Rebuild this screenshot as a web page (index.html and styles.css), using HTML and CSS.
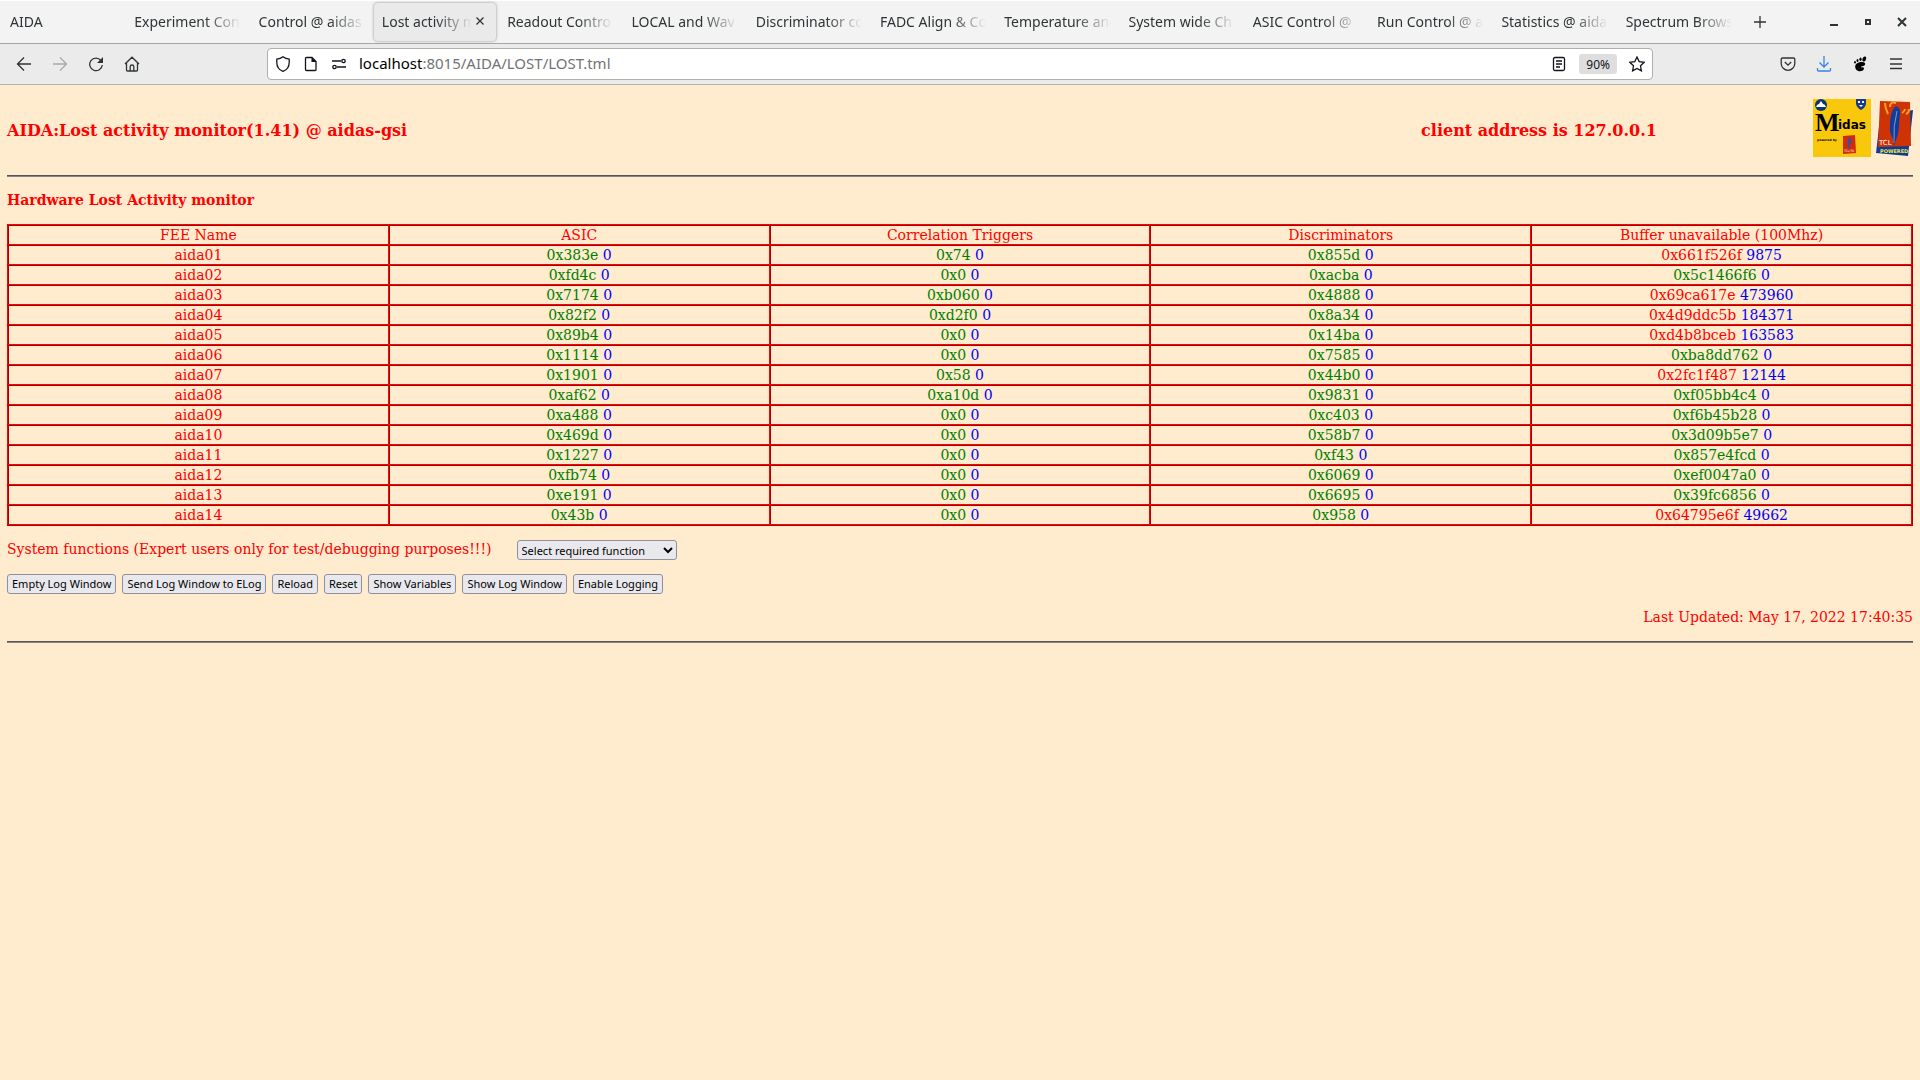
FILE: index.html
```html
<!DOCTYPE html>
<html lang="en">

<head>
  <meta charset="UTF-8">
  <meta name="viewport" content="width=device-width, initial-scale=1.0">
  <title>Lost activity monitor @ aidas-gsi</title>
  <link rel="stylesheet" href="styles.css">
</head>

<body>

  <!-- Tab strip -->
  <div class="tab-bar">
    <nav class="tabs" aria-label="Tabs">
      <a class="tab" href="#"><span>AIDA</span></a>
      <a class="tab" href="#"><span>Experiment Cont</span></a>
      <a class="tab" href="#"><span>Control @ aidas</span></a>
      <div class="tab selected">
        <a href="#"><span>Lost activity m</span></a>
        <button class="tab-close" aria-label="Close tab">
          <svg width="8" height="8" viewBox="0 0 8 8"><path d="M0.5 0.5l7 7M7.5 0.5l-7 7"/></svg>
        </button>
      </div>
      <a class="tab" href="#"><span>Readout Contro</span></a>
      <a class="tab" href="#"><span>LOCAL and Wav</span></a>
      <a class="tab" href="#"><span>Discriminator co</span></a>
      <a class="tab" href="#"><span>FADC Align &amp; Co</span></a>
      <a class="tab" href="#"><span>Temperature and</span></a>
      <a class="tab" href="#"><span>System wide Ch</span></a>
      <a class="tab" href="#"><span>ASIC Control @</span></a>
      <a class="tab" href="#"><span>Run Control @ a</span></a>
      <a class="tab" href="#"><span>Statistics @ aida</span></a>
      <a class="tab" href="#"><span>Spectrum Brows</span></a>
    </nav>
    <button class="icon-btn new-tab" aria-label="New tab">
      <svg width="12" height="12" viewBox="0 0 12 12"><path d="M6 0v12M0 6h12"/></svg>
    </button>
    <div class="window-buttons">
      <button class="icon-btn" aria-label="Minimize">
        <svg width="10" height="10" viewBox="0 0 10 10"><path class="heavy" d="M1 8h8"/></svg>
      </button>
      <button class="icon-btn" aria-label="Restore">
        <svg width="10" height="10" viewBox="0 0 10 10"><path class="heavy" d="M3 3h4v4h-4z"/></svg>
      </button>
      <button class="icon-btn" aria-label="Close">
        <svg width="10" height="10" viewBox="0 0 10 10"><path class="heavy" d="M1 1l8 8M9 1l-8 8"/></svg>
      </button>
    </div>
  </div>

  <!-- Navigation toolbar -->
  <div class="toolbar">
    <div class="nav-buttons">
      <button class="icon-btn" aria-label="Back">
        <svg width="16" height="16" viewBox="0 0 16 16"><path d="M15 8H1.5M8 1.5L1.5 8L8 14.5"/></svg>
      </button>
      <button class="icon-btn" aria-label="Forward" disabled>
        <svg width="16" height="16" viewBox="0 0 16 16"><path d="M1 8h13.500M8 1.500L14.500 8L8 14.500"/></svg>
      </button>
      <button class="icon-btn" aria-label="Reload page">
        <svg width="16" height="16" viewBox="0 0 16 16"><path d="M13 4.500A6.300 6.300 0 1 0 14.300 9"/><path class="solid" d="M15 1v6H9z"/></svg>
      </button>
      <button class="icon-btn" aria-label="Home">
        <svg width="16" height="16" viewBox="0 0 16 16"><path d="M1 8L8 1.200L15 8M2.500 6.800V14q0 1 1 1h9q1 0 1-1V6.800M6.200 14.500V10.500q0-1.500 1.800-1.500t1.800 1.500V14.500"/></svg>
      </button>
    </div>

    <div class="url-bar">
      <button class="icon-btn" aria-label="Tracking protection">
        <svg width="16" height="16" viewBox="0 0 16 16"><path d="M8 0.800Q10.500 2.800 14.200 3.200V6.500c0 4-2.500 7.500-6.200 8.800C4.300 14 1.800 10.500 1.800 6.500V3.200Q5.500 2.800 8 0.800z"/></svg>
      </button>
      <button class="icon-btn" aria-label="Site information">
        <svg width="16" height="16" viewBox="0 0 16 16"><path d="M3.500 1.500H9L13 5.500V13.500q0 1-1 1H3.500q-1 0-1-1V2.500q0-1 1-1z"/><path class="solid" d="M8.500 1v5H13.500z"/></svg>
      </button>
      <button class="icon-btn" aria-label="Permissions">
        <svg width="16" height="16" viewBox="0 0 16 16"><path d="M1 5h9M6 11h9"/><circle cx="12.500" cy="5" r="1.700"/><circle cx="3.500" cy="11" r="1.700"/></svg>
      </button>
      <a class="address" href="#"><b>localhost</b>:8015/AIDA/LOST/LOST.tml</a>
      <button class="icon-btn" aria-label="Reader view">
        <svg width="16" height="16" viewBox="0 0 16 16"><rect x="2.500" y="1.500" width="11" height="13" rx="1.500"/><path d="M5 5h6M5 8h6M5 11h4"/></svg>
      </button>
      <button class="zoom-level">90%</button>
      <button class="icon-btn" aria-label="Bookmark">
        <svg width="16" height="16" viewBox="0 0 16 16"><path d="M8 1l2.200 4.600 5 .7-3.700 3.500.9 5.100L8 12.500l-4.400 2.400.9-5.100L.8 6.300l5-.7z"/></svg>
      </button>
    </div>

    <div class="menu-buttons">
      <button class="icon-btn" aria-label="Save to Pocket">
        <svg width="16" height="16" viewBox="0 0 16 16"><path d="M2.500 2h11q1.300 0 1.300 1.300V7.500a6.800 6.800 0 0 1-13.600 0V3.300Q1.200 2 2.500 2zM4.800 6L8 9.200L11.200 6"/></svg>
      </button>
      <button class="icon-btn download" aria-label="Downloads">
        <svg width="16" height="18" viewBox="0 0 16 18"><path d="M8 1v11M3.500 7.500L8 12L12.500 7.500M1.500 13v2q0 1 1 1h11q1 0 1-1V13"/></svg>
      </button>
      <button class="icon-btn" aria-label="GNOME Shell integration">
        <svg class="foot" width="16" height="16" viewBox="0 0 16 16">
          <path d="M11.500 6.300c2.500.7 2 3.300-.2 3.700-2 .3-2.700.8-1.800 1.500 1.700-.6 3 .3 2.300 1.800C11 15 9 15.500 7 15.200c-2.700-.4-4-2.700-3.800-5C3.500 7.500 7.500 5.300 11.500 6.300z"/>
          <ellipse cx="12.300" cy="3" rx="1.700" ry="2.600" transform="rotate(22 12.300 3)"/>
          <ellipse cx="8.500" cy="3.200" rx="1.100" ry="1.700"/>
          <ellipse cx="5.500" cy="4.400" rx="1" ry="1.500"/>
          <ellipse cx="3" cy="6.200" rx=".9" ry="1.200"/>
        </svg>
      </button>
      <button class="icon-btn" aria-label="Application menu">
        <svg width="14" height="16" viewBox="0 0 14 16"><path d="M1 3h12M1 8h12M1 12.500h12"/></svg>
      </button>
    </div>
  </div>

  <main class="page">
    <header>
      <h1>AIDA:Lost activity monitor(1.41) @ aidas-gsi</h1>
      <h1 class="client">client address is 127.0.0.1</h1>
      <div class="logos">
        <a href="#" aria-label="Midas">
          <svg width="58" height="58" viewBox="0 0 58 58">
            <rect width="58" height="58" fill="#f9c80a"/>
            <circle cx="8" cy="6" r="6" fill="#0c3572"/>
            <path d="M3 8q1-3 3-3l2-3 2 3q2 0 3 3z" fill="#fff"/>
            <path d="M43 0h10v5q-1 4-5 6-4-2-5-6z" fill="#173b8c"/>
            <path d="M45 2h2v2h-2zM49 2h2v2h-2zM46 6h4l-2 2z" fill="#fff"/>
            <text x="2" y="32" class="logo-m">M</text>
            <text x="25" y="30" class="logo-idas">idas</text>
            <text x="4" y="42" class="logo-small">powered by</text>
            <path d="M30 37l12-1 1 18-13 1z" fill="#d02c0c"/>
            <path d="M37 38q3 3 0 8l-1 5-1-5q-1-5 2-8z" fill="#3a4da0"/>
            <text x="31" y="53" class="logo-tiny">TCL/TK</text>
          </svg>
        </a>
        <a href="#" aria-label="Tcl powered">
          <svg width="37" height="58" viewBox="0 0 37 58">
            <path d="M32 12l5-1-5 46-32-3 3-26z" fill="#0c3b96"/>
            <path d="M4 2l30 1 1 44-33 1z" fill="#cf3205"/>
            <path d="M20 7q5 2 4 9l-1 9q0 9-3 16l-2 6-1-7q-4-6-3-14 0-14 6-19z" fill="#103c9c"/>
            <path d="M21 12q-4 15-3 32" fill="none" stroke="#8296c8"/>
            <path d="M9 4q0 5 3 11M20 4q-6-2-6 4M26 14q3-2 3-4M30 15q3-1 3-5" fill="none" stroke="#f2a51f" stroke-width="2"/>
            <text x="3" y="46" class="logo-tcl">TCL</text>
            <text x="4" y="54" class="logo-powered">POWERED</text>
          </svg>
        </a>
      </div>
    </header>

    <hr>

    <h2>Hardware Lost Activity monitor</h2>

    <table class="lost-table">
      <thead>
        <tr><th>FEE Name</th><th>ASIC</th><th>Correlation Triggers</th><th>Discriminators</th><th>Buffer unavailable (100Mhz)</th></tr>
      </thead>
      <tbody id="lostRows"></tbody>
    </table>

    <div class="functions">
      <label for="sysFunction">System functions (Expert users only for test/debugging purposes!!!)</label>
      <select id="sysFunction">
        <option>Select required function</option>
      </select>
    </div>

    <div class="actions">
      <button>Empty Log Window</button>
      <button>Send Log Window to ELog</button>
      <button>Reload</button>
      <button>Reset</button>
      <button>Show Variables</button>
      <button>Show Log Window</button>
      <button>Enable Logging</button>
    </div>

    <p class="updated">Last Updated: May 17, 2022 17:40:35</p>

    <hr>
  </main>

  <script>
    // name, ASIC, correlation triggers, discriminators, buffer unavailable, lost buffer count
    const rows = [
      ['aida01', '0x383e', '0x74', '0x855d', '0x661f526f', 9875],
      ['aida02', '0xfd4c', '0x0', '0xacba', '0x5c1466f6', 0],
      ['aida03', '0x7174', '0xb060', '0x4888', '0x69ca617e', 473960],
      ['aida04', '0x82f2', '0xd2f0', '0x8a34', '0x4d9ddc5b', 184371],
      ['aida05', '0x89b4', '0x0', '0x14ba', '0xd4b8bceb', 163583],
      ['aida06', '0x1114', '0x0', '0x7585', '0xba8dd762', 0],
      ['aida07', '0x1901', '0x58', '0x44b0', '0x2fc1f487', 12144],
      ['aida08', '0xaf62', '0xa10d', '0x9831', '0xf05bb4c4', 0],
      ['aida09', '0xa488', '0x0', '0xc403', '0xf6b45b28', 0],
      ['aida10', '0x469d', '0x0', '0x58b7', '0x3d09b5e7', 0],
      ['aida11', '0x1227', '0x0', '0xf43', '0x857e4fcd', 0],
      ['aida12', '0xfb74', '0x0', '0x6069', '0xef0047a0', 0],
      ['aida13', '0xe191', '0x0', '0x6695', '0x39fc6856', 0],
      ['aida14', '0x43b', '0x0', '0x958', '0x64795e6f', 49662],
    ];

    // A counter turns red when it has changed since the last update
    function cell(value, diff) {
      return `<td><span class="${diff ? 'changed' : 'steady'}">${value}</span> <span class="diff">${diff}</span></td>`;
    }

    document.getElementById('lostRows').innerHTML = rows.map(row => `
      <tr><td>${row[0]}</td>${cell(row[1], 0)}${cell(row[2], 0)}${cell(row[3], 0)}${cell(row[4], row[5])}</tr>
    `).join('');
  </script>

</body>

</html>
```
FILE: styles.css
```css
* {
  box-sizing: border-box;
}

body {
  margin: 0;
  background-color: #ffebcd;
  font-family: "DejaVu Serif", serif;
  font-size: 14px;
  color: #ff0000;
}

a {
  color: inherit;
  text-decoration: none;
}

/* Browser chrome */
.tab-bar,
.toolbar {
  display: flex;
  align-items: center;
  font-family: "Noto Sans", sans-serif;
  font-size: 14px;
  color: #2e3436;
}

.tab-bar {
  height: 44px;
  background-color: #f3f3f3;
  border-top: 1px solid #fff;
  border-bottom: 1px solid #a5a8a6;
}

.tabs {
  display: flex;
  flex: 0 1 1740px;
  min-width: 0;
}

.tab {
  display: flex;
  align-items: center;
  flex: 1 1 0;
  min-width: 0;
  height: 38px;
  padding: 0 8px 2px 10px;
}

.tab span {
  display: block;
  flex: 1;
  overflow: hidden;
  white-space: nowrap;
  mask-image: linear-gradient(to left, transparent, #000 36px);
}

.tab.selected {
  margin: 0 1px;
  padding: 0 8px 2px;
  background-color: #eaeaeb;
  border-radius: 4px;
  box-shadow: 0 0 3px #8c8c98;
}

.tab.selected a {
  flex: 1;
  min-width: 0;
}

.icon-btn,
.tab-close {
  display: flex;
  align-items: center;
  justify-content: center;
  padding: 0;
  border: none;
  background: none;
  color: inherit;
}

.tab-close {
  width: 16px;
  height: 16px;
}

.icon-btn {
  width: 16px;
  height: 28px;
}

.icon-btn:disabled {
  color: #a8abac;
}

.icon-btn svg,
.tab-close svg {
  fill: none;
  stroke: currentColor;
  stroke-width: 1.3;
}

.icon-btn .solid,
.icon-btn .foot {
  fill: currentColor;
  stroke: none;
}

.icon-btn .heavy {
  stroke-width: 2;
}

.new-tab {
  margin-left: 12px;
}

.window-buttons {
  display: flex;
  gap: 18px;
  margin-left: auto;
  padding-right: 10px;
}

.toolbar {
  height: 41px;
  background-color: #ebebeb;
  border-bottom: 1px solid #b3b3ae;
}

.nav-buttons {
  display: flex;
  flex: 1 1 0;
  gap: 20px;
  padding-left: 16px;
}

.url-bar {
  display: flex;
  align-items: center;
  flex: 0 1 1386px;
  gap: 12px;
  height: 32px;
  padding: 0 7px;
  background-color: #fff;
  border: 1px solid #b0b0ab;
  border-radius: 4px;
  color: #15141a;
}

.address {
  flex: 1;
  padding-bottom: 2px;
  font-size: 15px;
  color: #737373;
}

.address b {
  font-weight: normal;
  color: #000;
}

.zoom-level {
  height: 20px;
  padding: 0 7px;
  border: none;
  border-radius: 3px;
  background-color: #dedede;
  font-family: inherit;
  font-size: 12px;
  color: inherit;
}

.menu-buttons {
  display: flex;
  flex: 1 1 0;
  justify-content: flex-end;
  gap: 20px;
  padding-right: 16px;
}

.download {
  color: #3584e4;
}

.foot {
  color: #000;
}

/* Monitor page */
.page {
  padding: 14px 7px;
}

header {
  display: grid;
  grid-template-columns: 66% 1fr auto;
  align-items: center;
  margin-bottom: 18px;
}

h1 {
  margin: 0;
  padding-top: 4px;
  font-size: 16px;
}

.client {
  text-align: center;
}

.logos {
  display: flex;
  gap: 5px;
}

.logos a,
.logos svg {
  display: block;
}

.logo-m,
.logo-idas,
.logo-small {
  fill: #000;
  font-weight: bold;
}

.logo-m {
  font-family: "Liberation Serif", serif;
  font-size: 26px;
}

.logo-idas {
  font-family: "DejaVu Sans", sans-serif;
  font-size: 12px;
}

.logo-small {
  font-family: "DejaVu Sans", sans-serif;
  font-size: 3px;
}

.logo-tiny {
  fill: #fff;
  font-family: "DejaVu Sans", sans-serif;
  font-size: 3px;
}

.logo-tcl {
  fill: #fff;
  font-family: "DejaVu Sans", sans-serif;
  font-size: 7px;
}

.logo-powered {
  fill: #f0e838;
  font-family: "DejaVu Sans", sans-serif;
  font-size: 5px;
  font-weight: bold;
}

hr {
  height: 2px;
  margin: 15px 0;
  border: none;
  border-top: 1px solid #555;
  background-color: #858585;
}

h2 {
  margin: 0 0 15px;
  font-size: 14px;
  line-height: 17px;
}

.lost-table {
  width: 100%;
  table-layout: fixed;
  border-collapse: collapse;
  border: 2px ridge #ff0000;
}

.lost-table th,
.lost-table td {
  height: 20px;
  padding: 0;
  border: 2px ridge #ff0000;
  font-weight: normal;
  line-height: 18px;
  text-align: center;
}

.steady {
  color: #008000;
}

.changed {
  color: #ff0000;
}

.diff {
  color: #0000ff;
}

.functions {
  display: flex;
  align-items: center;
  gap: 25px;
  margin-top: 14px;
}

.functions label {
  padding-bottom: 2px;
}

select,
.actions button {
  height: 20px;
  border: 1px solid #8f8f9d;
  border-radius: 3px;
  background-color: #e9e9ed;
  font-family: "Noto Sans", sans-serif;
  font-size: 11px;
  color: #000;
}

select {
  width: 160px;
  padding: 0;
}

.actions {
  display: flex;
  gap: 6px;
  margin-top: 14px;
}

.actions button {
  padding: 0 4px;
  line-height: 16px;
}

.updated {
  margin: 15px 0 0;
  line-height: 17px;
  text-align: right;
}
```
